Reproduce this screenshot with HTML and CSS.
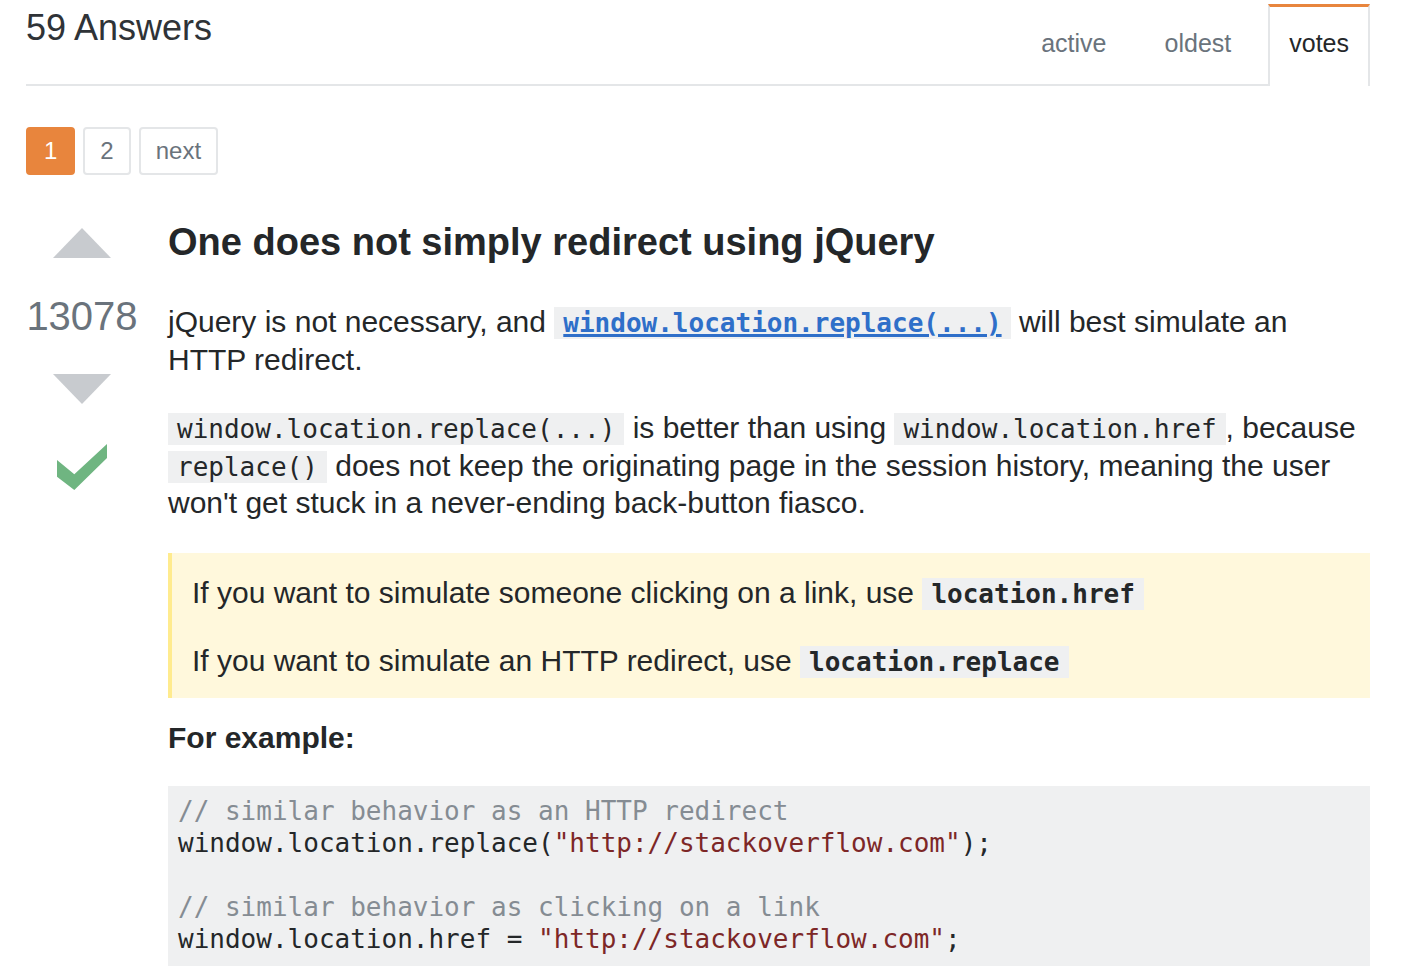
FILE: index.html
```html
<!DOCTYPE html>
<html lang="en">
<head>
<meta charset="utf-8">
<title>59 Answers</title>
<link rel="stylesheet" href="styles.css">
</head>
<body>
<div class="page">
  <div class="answers-header">
    <h2 class="answers-count">59 Answers</h2>
    <nav class="tabs">
      <a class="tab" href="#">active</a>
      <a class="tab" href="#">oldest</a>
      <a class="tab is-selected" href="#">votes</a>
    </nav>
  </div>

  <div class="pager">
    <span class="page-num is-current">1</span>
    <a class="page-num" href="#">2</a>
    <a class="page-num" href="#">next</a>
  </div>

  <div class="post">
    <div class="votecell">
      <svg class="vote-up" width="58" height="30" viewBox="0 0 58 30"><polygon points="29,0 58,30 0,30"/></svg>
      <div class="vote-count">13078</div>
      <svg class="vote-down" width="58" height="30" viewBox="0 0 58 30"><polygon points="0,0 58,0 29,30"/></svg>
      <svg class="accepted" width="50" height="46" viewBox="0 0 50 46"><polygon points="0,16 17.3,30.3 50,0 50,14 17.3,46 0,32.7"/></svg>
    </div>
    <div class="postcell">
      <h1 class="post-title">One does not simply redirect using jQuery</h1>
      <p class="post-p">jQuery is not necessary, and <a class="code-link" href="#"><code class="code">window.location.replace(...)</code></a> will best simulate an HTTP redirect.</p>
      <p class="post-p"><code class="code">window.location.replace(...)</code> is better than using <code class="code">window.location.href</code>, because <code class="code">replace()</code> does not keep the originating page in the session history, meaning the user won't get stuck in a never-ending back-button fiasco.</p>
      <blockquote class="quote">
        <p class="quote-p">If you want to simulate someone clicking on a link, use <strong><code class="code">location.href</code></strong></p>
        <p class="quote-p">If you want to simulate an HTTP redirect, use <strong><code class="code">location.replace</code></strong></p>
      </blockquote>
      <p class="example-label"><strong>For example:</strong></p>
      <pre class="code-block"><code><span class="com">// similar behavior as an HTTP redirect</span>
window.location.replace(<span class="str">"http://stackoverflow.com"</span>);

<span class="com">// similar behavior as clicking on a link</span>
window.location.href = <span class="str">"http://stackoverflow.com"</span>;</code></pre>
    </div>
  </div>
</div>
</body>
</html>
```

FILE: styles.css
```css
html, body {
  margin: 0;
  padding: 0;
  background: #ffffff;
}

body {
  font-family: "Liberation Sans", Arial, sans-serif;
  color: #242729;
}

.page {
  width: 1344px;
  margin-left: 26px;
}

/* header */
.answers-header {
  display: flex;
  justify-content: space-between;
  align-items: flex-start;
  height: 84px;
  border-bottom: 2px solid #e4e6e8;
}

.answers-count {
  margin: 0;
  padding-top: 5px;
  font-size: 36px;
  font-weight: normal;
  line-height: 1.3;
  color: #2f3337;
}

.tabs {
  display: flex;
  margin-top: 4px;
}

.tab {
  display: block;
  margin-left: 16px;
  padding: 21px 19px 28px;
  font-size: 25px;
  line-height: 30px;
  color: #6a737c;
  text-decoration: none;
  border: 2px solid transparent;
  border-top: 3px solid transparent;
  border-bottom: 0;
  height: 30px;
}

.tab.is-selected {
  color: #242729;
  background: #ffffff;
  border-color: #e4e6e8;
  border-top-color: #e8853d;
}

/* pager */
.pager {
  display: flex;
  gap: 8px;
  margin-top: 41px;
}

.page-num {
  display: block;
  padding: 0 15px;
  font-size: 24px;
  line-height: 44px;
  color: #6a737c;
  text-decoration: none;
  border: 2px solid #e4e6e8;
  border-radius: 4px;
}

.page-num.is-current {
  background: #e8853d;
  border-color: #e8853d;
  color: #ffffff;
  padding: 0 16px;
}

/* post */
.post {
  display: grid;
  grid-template-columns: 112px 1fr;
  column-gap: 30px;
  margin-top: 42px;
}

.votecell {
  display: flex;
  flex-direction: column;
  align-items: center;
}

.vote-up {
  display: block;
  margin-top: 11px;
  fill: #c8cbcf;
}

.vote-count {
  margin-top: 34px;
  font-size: 40px;
  line-height: 48px;
  color: #6a737c;
}

.vote-down {
  display: block;
  margin-top: 34px;
  fill: #c8cbcf;
}

.accepted {
  display: block;
  margin-top: 40px;
  fill: #6fb581;
}

.postcell {
  min-width: 0;
}

.post-title {
  margin: 0 0 36px;
  font-size: 38px;
  line-height: 50px;
  font-weight: bold;
  color: #242729;
}

.post-p {
  margin: 0 0 31px;
  font-size: 30px;
  line-height: 37.5px;
}

.code {
  font-family: "DejaVu Sans Mono", "Liberation Mono", monospace;
  font-size: 26px;
  line-height: 1;
  background: #eff0f1;
  padding: 1px 9px;
}

.code-link {
  color: #2f6fc9;
  font-weight: bold;
  text-decoration: underline;
}

.code-link .code {
  color: #2f6fc9;
}

.quote {
  margin: 31px 0 21px;
  padding: 21px 20px 18px 20px;
  background: #fff8dc;
  border-left: 4px solid #ffeb8e;
}

.quote-p {
  margin: 0 0 31px;
  font-size: 30px;
  line-height: 37.5px;
}

.quote-p:last-child {
  margin-bottom: 0;
}

.example-label {
  margin: 0 0 30px;
  font-size: 30px;
  line-height: 37.5px;
}

.code-block {
  margin: 0;
  padding: 9px 10px 11px;
  background: #eff0f1;
  font-family: "DejaVu Sans Mono", "Liberation Mono", monospace;
  font-size: 26px;
  line-height: 32px;
  color: #242729;
  white-space: pre;
}

.code-block code {
  font-family: inherit;
}

.com {
  color: #858c93;
}

.str {
  color: #7d2727;
}
```
